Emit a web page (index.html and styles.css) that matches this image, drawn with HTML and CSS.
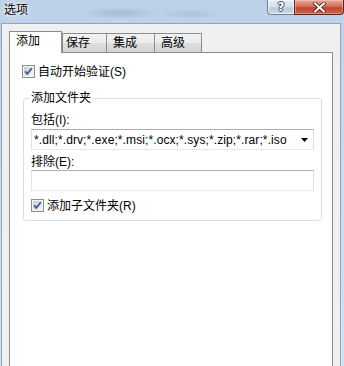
FILE: index.html
```html
<!DOCTYPE html>
<html>
<head>
<meta charset="utf-8">
<link rel="stylesheet" href="styles.css">
</head>
<body>
<div class="window">
  <div class="titlebar">
    <span class="title">选项</span>
    <div class="caption">
      <div class="btn-help">?</div>
      <div class="btn-close">
        <svg width="13" height="11" viewBox="0 0 13 11">
          <path d="M2 1.5 L11 9.5 M11 1.5 L2 9.5" stroke="#4a1a12" stroke-width="3.6" stroke-linecap="square" fill="none"/>
          <path d="M2 1.5 L11 9.5 M11 1.5 L2 9.5" stroke="#ffffff" stroke-width="2" stroke-linecap="square" fill="none"/>
        </svg>
      </div>
    </div>
  </div>
  <div class="client">
    <div class="tabs">
      <div class="tab active">添加</div>
      <div class="tab t2">保存</div>
      <div class="tab t3">集成</div>
      <div class="tab t4">高级</div>
    </div>
    <div class="panel">
      <div class="check-row">
        <svg class="checkbox" width="13" height="13" viewBox="0 0 13 13">
          <defs><linearGradient id="cb1" x1="0" y1="0" x2="1" y2="1"><stop offset="0" stop-color="#c9ccd1"/><stop offset="1" stop-color="#f7f7f7"/></linearGradient></defs>
          <rect x="0.5" y="0.5" width="12" height="12" fill="#f4f4f4" stroke="#8e8f8f"/>
          <rect x="2" y="2" width="9" height="9" fill="url(#cb1)"/>
          <path d="M3.2 6.3 L5.3 8.8 L9.8 3.2" fill="none" stroke="#3f5690" stroke-width="1.8"/>
        </svg>
        <span>自动开始验证(S)</span>
      </div>
      <fieldset class="group">
        <legend>添加文件夹</legend>
        <div class="label">包括(I):</div>
        <div class="combo">
          <span class="combo-text">*.dll;*.drv;*.exe;*.msi;*.ocx;*.sys;*.zip;*.rar;*.iso</span>
          <svg width="7" height="4" viewBox="0 0 7 4"><path d="M0 0H7L3.5 4z" fill="#000"/></svg>
        </div>
        <div class="label exclude">排除(E):</div>
        <div class="textbox"></div>
        <div class="check-row sub">
          <svg class="checkbox" width="13" height="13" viewBox="0 0 13 13">
            <defs><linearGradient id="cb2" x1="0" y1="0" x2="1" y2="1"><stop offset="0" stop-color="#c9ccd1"/><stop offset="1" stop-color="#f7f7f7"/></linearGradient></defs>
            <rect x="0.5" y="0.5" width="12" height="12" fill="#f4f4f4" stroke="#8e8f8f"/>
            <rect x="2" y="2" width="9" height="9" fill="url(#cb2)"/>
            <path d="M3.2 6.3 L5.3 8.8 L9.8 3.2" fill="none" stroke="#3f5690" stroke-width="1.8"/>
          </svg>
          <span>添加子文件夹(R)</span>
        </div>
      </fieldset>
    </div>
  </div>
</div>
</body>
</html>
```

FILE: styles.css
```css
* { box-sizing: border-box; }
html, body { margin: 0; height: 100%; }
body {
  font-family: "Liberation Sans", "Noto Sans CJK SC", sans-serif;
  font-size: 12px;
  color: #000;
  overflow: hidden;
  background: #c5d8ec;
}
.window {
  width: 344px;
  height: 366px;
  display: flex;
  flex-direction: column;
  background: linear-gradient(180deg, #bcd1e8 0%, #c9dbee 40%, #d3e2f1 100%);
}
.titlebar {
  height: 23px;
  flex: none;
  display: flex;
  justify-content: space-between;
  align-items: flex-start;
  background:
    radial-gradient(ellipse 40px 6px at 120px 13px, rgba(120,140,170,0.35), rgba(120,140,170,0) 100%),
    radial-gradient(ellipse 30px 5px at 190px 14px, rgba(120,140,170,0.25), rgba(120,140,170,0) 100%);
}
.title {
  padding: 2px 0 0 4px;
  line-height: 16px;
  text-shadow: 0 0 6px #ffffff, 0 0 3px #ffffff;
}
.caption { display: flex; }
.btn-help {
  width: 27px;
  height: 15px;
  border: 1px solid #6f8298;
  border-top: none;
  border-right: none;
  border-radius: 0 0 0 4px;
  background: linear-gradient(180deg, #e6edf6 0%, #d3deeb 50%, #bccbdd 55%, #c9d6e6 100%);
  box-shadow: inset 0 0 0 1px rgba(255,255,255,0.6);
  text-align: center;
  font-family: "DejaVu Sans", sans-serif;
  font-weight: bold;
  font-size: 12px;
  line-height: 14px;
  color: #ffffff;
  text-shadow: 1px 0 0 #3d4d63, -1px 0 0 #3d4d63, 0 1px 0 #3d4d63, 0 -1px 0 #3d4d63;
}
.btn-close {
  width: 50px;
  height: 15px;
  border: 1px solid #5e2419;
  border-top: none;
  border-radius: 0 0 4px 0;
  background: linear-gradient(180deg, #e7a89a 0%, #d7705c 45%, #c34530 55%, #d0624a 100%);
  box-shadow: inset 0 0 0 1px rgba(255,220,210,0.4);
  display: flex;
  align-items: center;
  justify-content: center;
}
.client {
  flex: 1;
  margin: 0 3px 0 1px;
  border: 1px solid #8ea4be;
  border-bottom: none;
  background: #f0f0f0;
  padding: 7px 7px 0 7px;
  display: flex;
  flex-direction: column;
}
.tabs {
  height: 21px;
  flex: none;
  display: flex;
  align-items: flex-end;
  position: relative;
  z-index: 1;
}
.tab {
  height: 19px;
  border: 1px solid #898c95;
  border-bottom: none;
  background: linear-gradient(180deg, #f3f3f3 0%, #ebebeb 50%, #dedede 52%, #d4d4d4 100%);
  padding: 1px 0 0 6px;
  line-height: 16px;
  white-space: nowrap;
}
.tab.active {
  width: 53px;
  height: 22px;
  margin-bottom: -1px;
  background: #ffffff;
  padding: 1px 0 0 6px;
}
.tab.t2 { width: 45px; padding-left: 3px; }
.tab.t3 { width: 49px; margin-left: -1px; }
.tab.t4 { width: 48px; margin-left: -1px; }
.panel {
  flex: 1;
  background: #ffffff;
  border: 1px solid #898c95;
  border-bottom: none;
  padding: 12px 10px 0 12px;
}
.check-row {
  display: flex;
  align-items: center;
  gap: 3px;
  height: 13px;
  line-height: 16px;
  white-space: nowrap;
}
.checkbox { flex: none; display: block; }
.group {
  margin: 12px 0 0 1px;
  padding: 6px 7px 8px 7px;
  border: 1px solid #d5dfe5;
  border-radius: 3px;
  box-shadow: inset 1px 1px 0 #ffffff;
  min-width: 0;
}
.group legend {
  padding: 0 2px;
  margin-left: -2px;
  line-height: 16px;
}
.label { line-height: 16px; }
.label.exclude { margin-top: 4px; }
.combo {
  height: 21px;
  margin-top: 1px;
  border: 1px solid;
  border-color: #abadb3 #dbdfe6 #e3e9ef #e2e3ea;
  background: #ffffff;
  display: flex;
  align-items: center;
  justify-content: space-between;
  padding: 0 5px 0 2px;
  white-space: nowrap;
  line-height: 16px;
}
.combo-text { letter-spacing: 0.1px; }
.combo svg { display: block; flex: none; }
.textbox {
  height: 21px;
  border: 1px solid;
  border-color: #abadb3 #dbdfe6 #e3e9ef #e2e3ea;
  background: #ffffff;
}
.check-row.sub { margin-top: 8px; }
```
